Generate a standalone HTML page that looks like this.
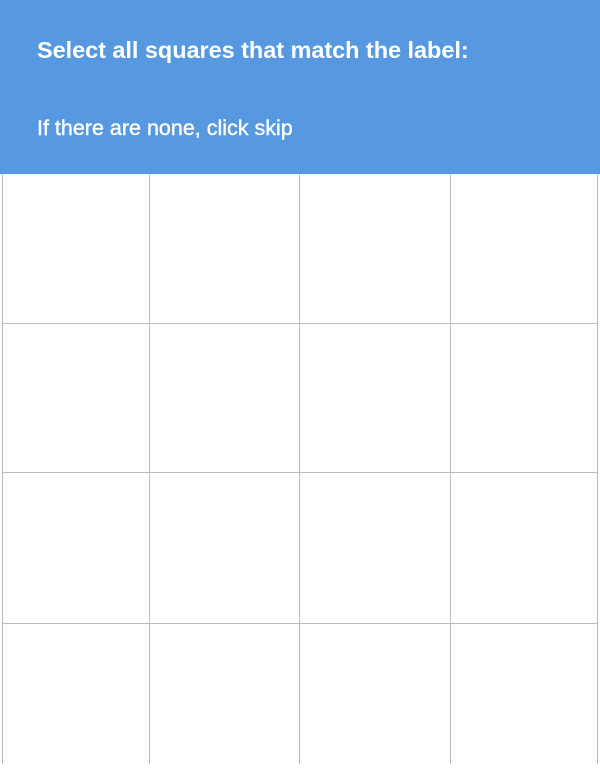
<!DOCTYPE html>
<html><head><style>
body{margin:0;width:600px;height:768px;background:#fff;overflow:hidden;font-family:"Liberation Sans",sans-serif;position:relative}
.hd{position:absolute;left:0;top:0;width:600px;height:174px;background:#5799e0}
.t1{position:absolute;left:37px;top:37px;color:#fff;font-weight:bold;font-size:23.5px;white-space:nowrap;letter-spacing:-0.05px}
.t2{position:absolute;left:37px;top:116px;color:#fff;font-size:21.5px;white-space:nowrap;letter-spacing:0px;-webkit-text-stroke:0.4px #fff}
.v{position:absolute;top:174px;height:590px;width:1px;background:#bbb}
.h{position:absolute;left:2px;width:596px;height:1px;background:#bbb}
</style></head><body>
<div class="hd"><div class="t1">Select all squares that match the label:</div><div class="t2">If there are none, click skip</div></div>
<div class="v" style="left:2px"></div>
<div class="v" style="left:149px"></div>
<div class="v" style="left:299px"></div>
<div class="v" style="left:450px"></div>
<div class="v" style="left:597px"></div>
<div class="h" style="top:323px"></div>
<div class="h" style="top:472px"></div>
<div class="h" style="top:623px"></div>
</body></html>
